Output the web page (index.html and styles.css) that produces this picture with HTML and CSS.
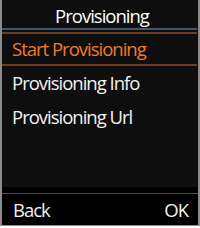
FILE: index.html
```html
<!DOCTYPE html>
<html>
<head>
<meta charset="utf-8">
<link rel="stylesheet" href="styles.css">
</head>
<body>
<div class="screen">
  <div class="title">Provisioning</div>
  <div class="rule-blue"></div>
  <div class="menu">
    <div class="item selected">Start Provisioning</div>
    <div class="item">Provisioning Info</div>
    <div class="item">Provisioning Url</div>
  </div>
  <div class="softkeys">
    <div class="keybar">
      <span class="key">Back</span>
      <span class="key">OK</span>
    </div>
  </div>
</div>
</body>
</html>
```

FILE: styles.css
```css
html, body {
  margin: 0;
  padding: 0;
  background: #ffffff;
}
.screen {
  width: 196px;
  height: 225px;
  border-left: 2px solid #8c8c8c;
  border-right: 2px solid #8c8c8c;
  border-bottom: 1px solid #8c8c8c;
  background: #0e0e0e;
  display: flex;
  flex-direction: column;
  font-family: "Open Sans", Lato, sans-serif;
  font-size: 18.5px;
  letter-spacing: -1px;
  color: #f2f2f2;
}
.title {
  height: 28px;
  line-height: 32px;
  padding-left: 4px;
  text-align: center;
  color: #ffffff;
}
.rule-blue {
  height: 2px;
  margin-right: 1px;
  background: #3e5873;
}
.menu {
  flex: 1;
  display: flex;
  flex-direction: column;
  padding-top: 2px;
}
.item {
  height: 34px;
  line-height: 34px;
  padding-left: 10px;
}
.item.selected {
  height: 30px;
  line-height: 30px;
  color: #f07a2a;
  border-top: 2px solid #6e3c1e;
  border-bottom: 2px solid #6e3c1e;
  margin-right: 1px;
}
.softkeys {
  height: 38px;
  background: #000000;
  padding-top: 6px;
  box-sizing: border-box;
  display: flex;
}
.keybar {
  flex: 1;
  border-top: 1px solid #3e5266;
  display: flex;
  justify-content: space-between;
  align-items: center;
  padding: 0 10px 0 11px;
}
```
